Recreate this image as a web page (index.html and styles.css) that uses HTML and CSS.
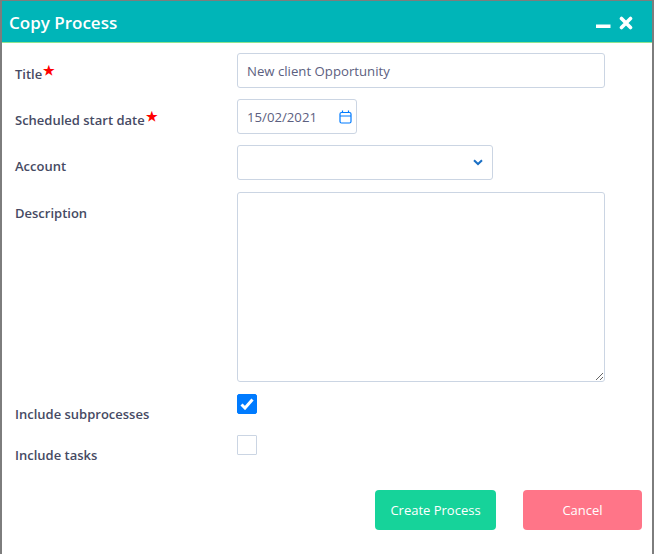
FILE: index.html
```html
<!DOCTYPE html>
<html lang="en">
<head>
    <meta charset="UTF-8">
    <title>Copy Process</title>
    <link rel="stylesheet" href="styles.css">
</head>
<body>
    <div class="dialog">
        <div class="dialog-header">
            <h2>Copy Process</h2>
            <div class="window-buttons">
                <svg width="15" height="14" viewBox="0 0 15 14"><rect x="0" y="8.5" width="14.5" height="3.5" fill="#fff"/></svg>
                <svg width="14" height="14" viewBox="0 0 14 14"><path d="M2.5 2.5 L11.5 11.5 M11.5 2.5 L2.5 11.5" stroke="#fff" stroke-width="3.6" stroke-linecap="round"/></svg>
            </div>
        </div>

        <form class="dialog-body">
            <div class="row">
                <label>Title<span class="req">★</span></label>
                <div class="field wide">New client Opportunity</div>
            </div>
            <div class="row">
                <label>Scheduled start date<span class="req">★</span></label>
                <div class="field date">
                    15/02/2021
                    <svg width="13" height="14" viewBox="0 0 13 14" fill="none" stroke="#007bff" stroke-width="1.2"><rect x="1" y="2.5" width="11" height="10.5" rx="1.5"/><path d="M1 6 H12 M3.5 0.5 V3 M9.5 0.5 V3"/></svg>
                </div>
            </div>
            <div class="row">
                <label>Account</label>
                <div class="field select">
                    <svg width="10" height="7" viewBox="0 0 10 7" fill="none" stroke="#1a6fc4" stroke-width="2"><path d="M1 1.2 L5 5 L9 1.2"/></svg>
                </div>
            </div>
            <div class="row row-area">
                <label>Description</label>
                <textarea class="field wide area"></textarea>
            </div>
            <div class="row row-check">
                <label>Include subprocesses</label>
                <span class="check checked">
                    <svg width="14" height="12" viewBox="0 0 14 12" fill="none" stroke="#fff" stroke-width="3"><path d="M1.5 6.5 L5 10 L12.5 1.5"/></svg>
                </span>
            </div>
            <div class="row row-check">
                <label>Include tasks</label>
                <span class="check"></span>
            </div>
            <div class="actions">
                <button type="button" class="btn btn-create">Create Process</button>
                <button type="button" class="btn btn-cancel">Cancel</button>
            </div>
        </form>
    </div>
</body>
</html>
```

FILE: styles.css
```css
html, body {
    margin: 0;
    padding: 0;
}

body {
    font-family: "Open Sans", "Noto Sans", sans-serif;
    background-color: #fff;
    color: #464a63;
}

.dialog {
    box-sizing: border-box;
    width: 654px;
    height: 554px;
    border: 2px solid #7d7d7d;
    border-bottom: none;
    border-top-width: 1px;
    background-color: #fff;
}

.dialog-header {
    display: flex;
    justify-content: space-between;
    align-items: center;
    box-sizing: border-box;
    height: 42px;
    padding: 1px 19px 0 7px;
    background-color: #00b5b8;
    border-top: 1px solid #00b5b8;
    border-bottom: 1px solid #8fe38f;
}

.dialog-header h2 {
    margin: 0;
    font-size: 17px;
    font-weight: 600;
    color: #fff;
}

.window-buttons {
    display: flex;
    gap: 8px;
    align-items: center;
}

.dialog-body {
    padding: 10px 10px 0 13px;
}

.row {
    display: flex;
    height: 35px;
    margin-bottom: 11px;
}

.row label {
    width: 222px;
    padding-top: 12px;
    font-size: 13px;
    font-weight: 600;
    line-height: 18px;
}

.req {
    position: relative;
    top: -4px;
    margin-left: 1px;
    color: #f00;
    font-size: 13px;
    line-height: 1;
}

.field {
    display: flex;
    align-items: center;
    justify-content: space-between;
    box-sizing: border-box;
    height: 35px;
    padding: 0 9px;
    border: 1px solid #cbd5e3;
    border-radius: 3px;
    background-color: #fff;
    color: #5c6080;
    font-family: inherit;
    font-size: 13.2px;
}

.wide {
    width: 368px;
}

.date {
    width: 120px;
    padding-right: 4px;
}

.select {
    width: 256px;
    justify-content: flex-end;
}

.row-area {
    height: 190px;
    margin-top: 12px;
    margin-bottom: 12px;
}

.area {
    height: 190px;
    resize: both;
}

.row-check {
    height: 20px;
    margin-bottom: 21px;
}

.row-check label {
    padding-top: 11px;
}

.check {
    display: flex;
    align-items: center;
    justify-content: center;
    box-sizing: border-box;
    width: 20px;
    height: 20px;
    border: 1px solid #cbd5e3;
    border-radius: 1px;
}

.checked {
    background-color: #007bff;
    border-color: #007bff;
    border-radius: 2px;
}

.actions {
    display: flex;
    justify-content: flex-end;
    gap: 27px;
    margin-top: 35px;
}

.btn {
    height: 40px;
    border: none;
    border-radius: 4px;
    color: #fff;
    font-family: inherit;
    font-size: 13px;
}

.btn-create {
    width: 121px;
    background-color: #16d39a;
}

.btn-cancel {
    width: 119px;
    background-color: #ff7588;
}
```
